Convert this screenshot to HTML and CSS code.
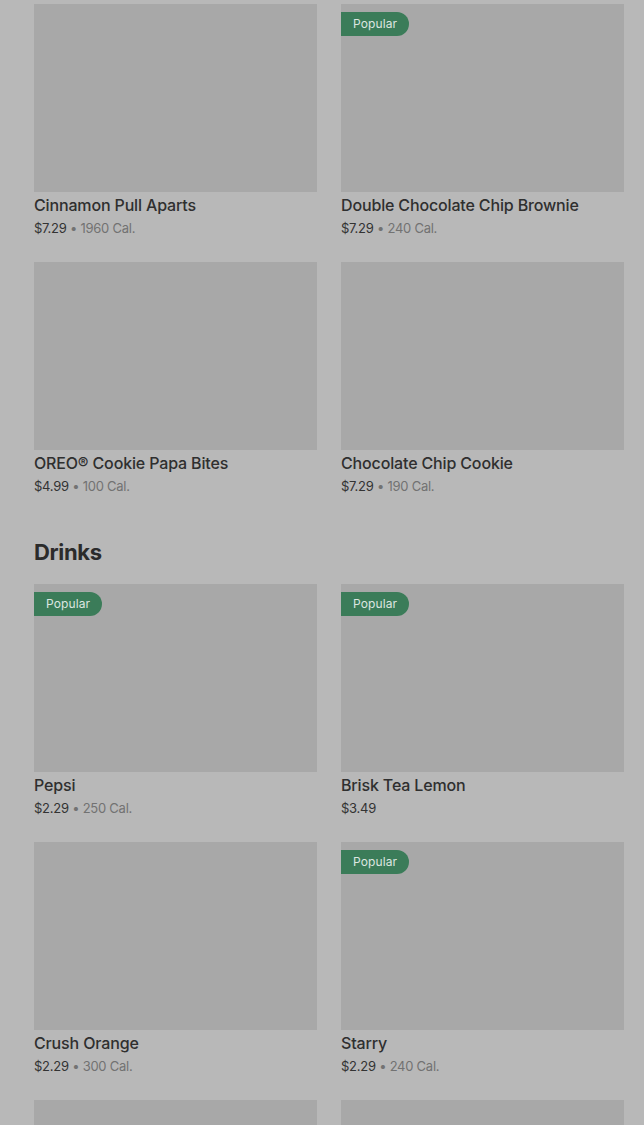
FILE: index.html
```html
<!DOCTYPE html>
<html lang="en">
<head>
<meta charset="utf-8">
<link rel="stylesheet" href="styles.css">
</head>
<body>
<main class="page">
  <section class="grid">
    <div class="card">
      <div class="thumb"></div>
      <div class="title">Cinnamon Pull Aparts</div>
      <div class="meta"><span class="price">$7.29</span><span class="cal"> • 1960 Cal.</span></div>
    </div>
    <div class="card">
      <div class="thumb"><span class="badge">Popular</span></div>
      <div class="title">Double Chocolate Chip Brownie</div>
      <div class="meta"><span class="price">$7.29</span><span class="cal"> • 240 Cal.</span></div>
    </div>
    <div class="card">
      <div class="thumb"></div>
      <div class="title">OREO® Cookie Papa Bites</div>
      <div class="meta"><span class="price">$4.99</span><span class="cal"> • 100 Cal.</span></div>
    </div>
    <div class="card">
      <div class="thumb"></div>
      <div class="title">Chocolate Chip Cookie</div>
      <div class="meta"><span class="price">$7.29</span><span class="cal"> • 190 Cal.</span></div>
    </div>
  </section>
  <h2 class="heading">Drinks</h2>
  <section class="grid">
    <div class="card">
      <div class="thumb"><span class="badge">Popular</span></div>
      <div class="title">Pepsi</div>
      <div class="meta"><span class="price">$2.29</span><span class="cal"> • 250 Cal.</span></div>
    </div>
    <div class="card">
      <div class="thumb"><span class="badge">Popular</span></div>
      <div class="title">Brisk Tea Lemon</div>
      <div class="meta"><span class="price">$3.49</span></div>
    </div>
    <div class="card">
      <div class="thumb"></div>
      <div class="title">Crush Orange</div>
      <div class="meta"><span class="price">$2.29</span><span class="cal"> • 300 Cal.</span></div>
    </div>
    <div class="card">
      <div class="thumb"><span class="badge">Popular</span></div>
      <div class="title">Starry</div>
      <div class="meta"><span class="price">$2.29</span><span class="cal"> • 240 Cal.</span></div>
    </div>
    <div class="card">
      <div class="thumb"></div>
    </div>
    <div class="card">
      <div class="thumb"></div>
    </div>
  </section>
</main>
</body>
</html>
```

FILE: styles.css
```css
html, body {
  margin: 0;
  padding: 0;
  background: #b8b8b8;
}
body {
  font-family: Inter, "Noto Sans", Roboto, sans-serif;
  color: #2f2f2f;
}
.page {
  box-sizing: border-box;
  height: 1125px;
  overflow: hidden;
  padding: 4px 20px 0 34px;
}
.grid {
  display: grid;
  grid-template-columns: 283px 283px;
  column-gap: 24px;
  row-gap: 24px;
}
.card {
  height: 234px;
}
.thumb {
  position: relative;
  height: 188px;
  background: #a8a8a8;
}
.badge {
  position: absolute;
  left: 0;
  top: 8px;
  height: 24px;
  line-height: 24px;
  padding: 0 12px;
  border-radius: 0 12px 12px 0;
  background: #3b7c59;
  color: #dde6e0;
  font-size: 12px;
  letter-spacing: 0.1px;
}
.title {
  margin-top: 3px;
  font-size: 16px;
  line-height: 20px;
  font-weight: 500;
  color: #2f2f2f;
  letter-spacing: -0.15px;
}
.meta {
  margin-top: 3px;
  font-size: 13px;
  line-height: 20px;
  letter-spacing: -0.25px;
}
.price {
  color: #333;
}
.cal {
  color: #727272;
}
.heading {
  margin: 0;
  padding: 42px 0 18px;
  font-size: 22px;
  line-height: 28px;
  font-weight: 700;
  color: #2b2b2b;
  letter-spacing: -0.35px;
}
```
